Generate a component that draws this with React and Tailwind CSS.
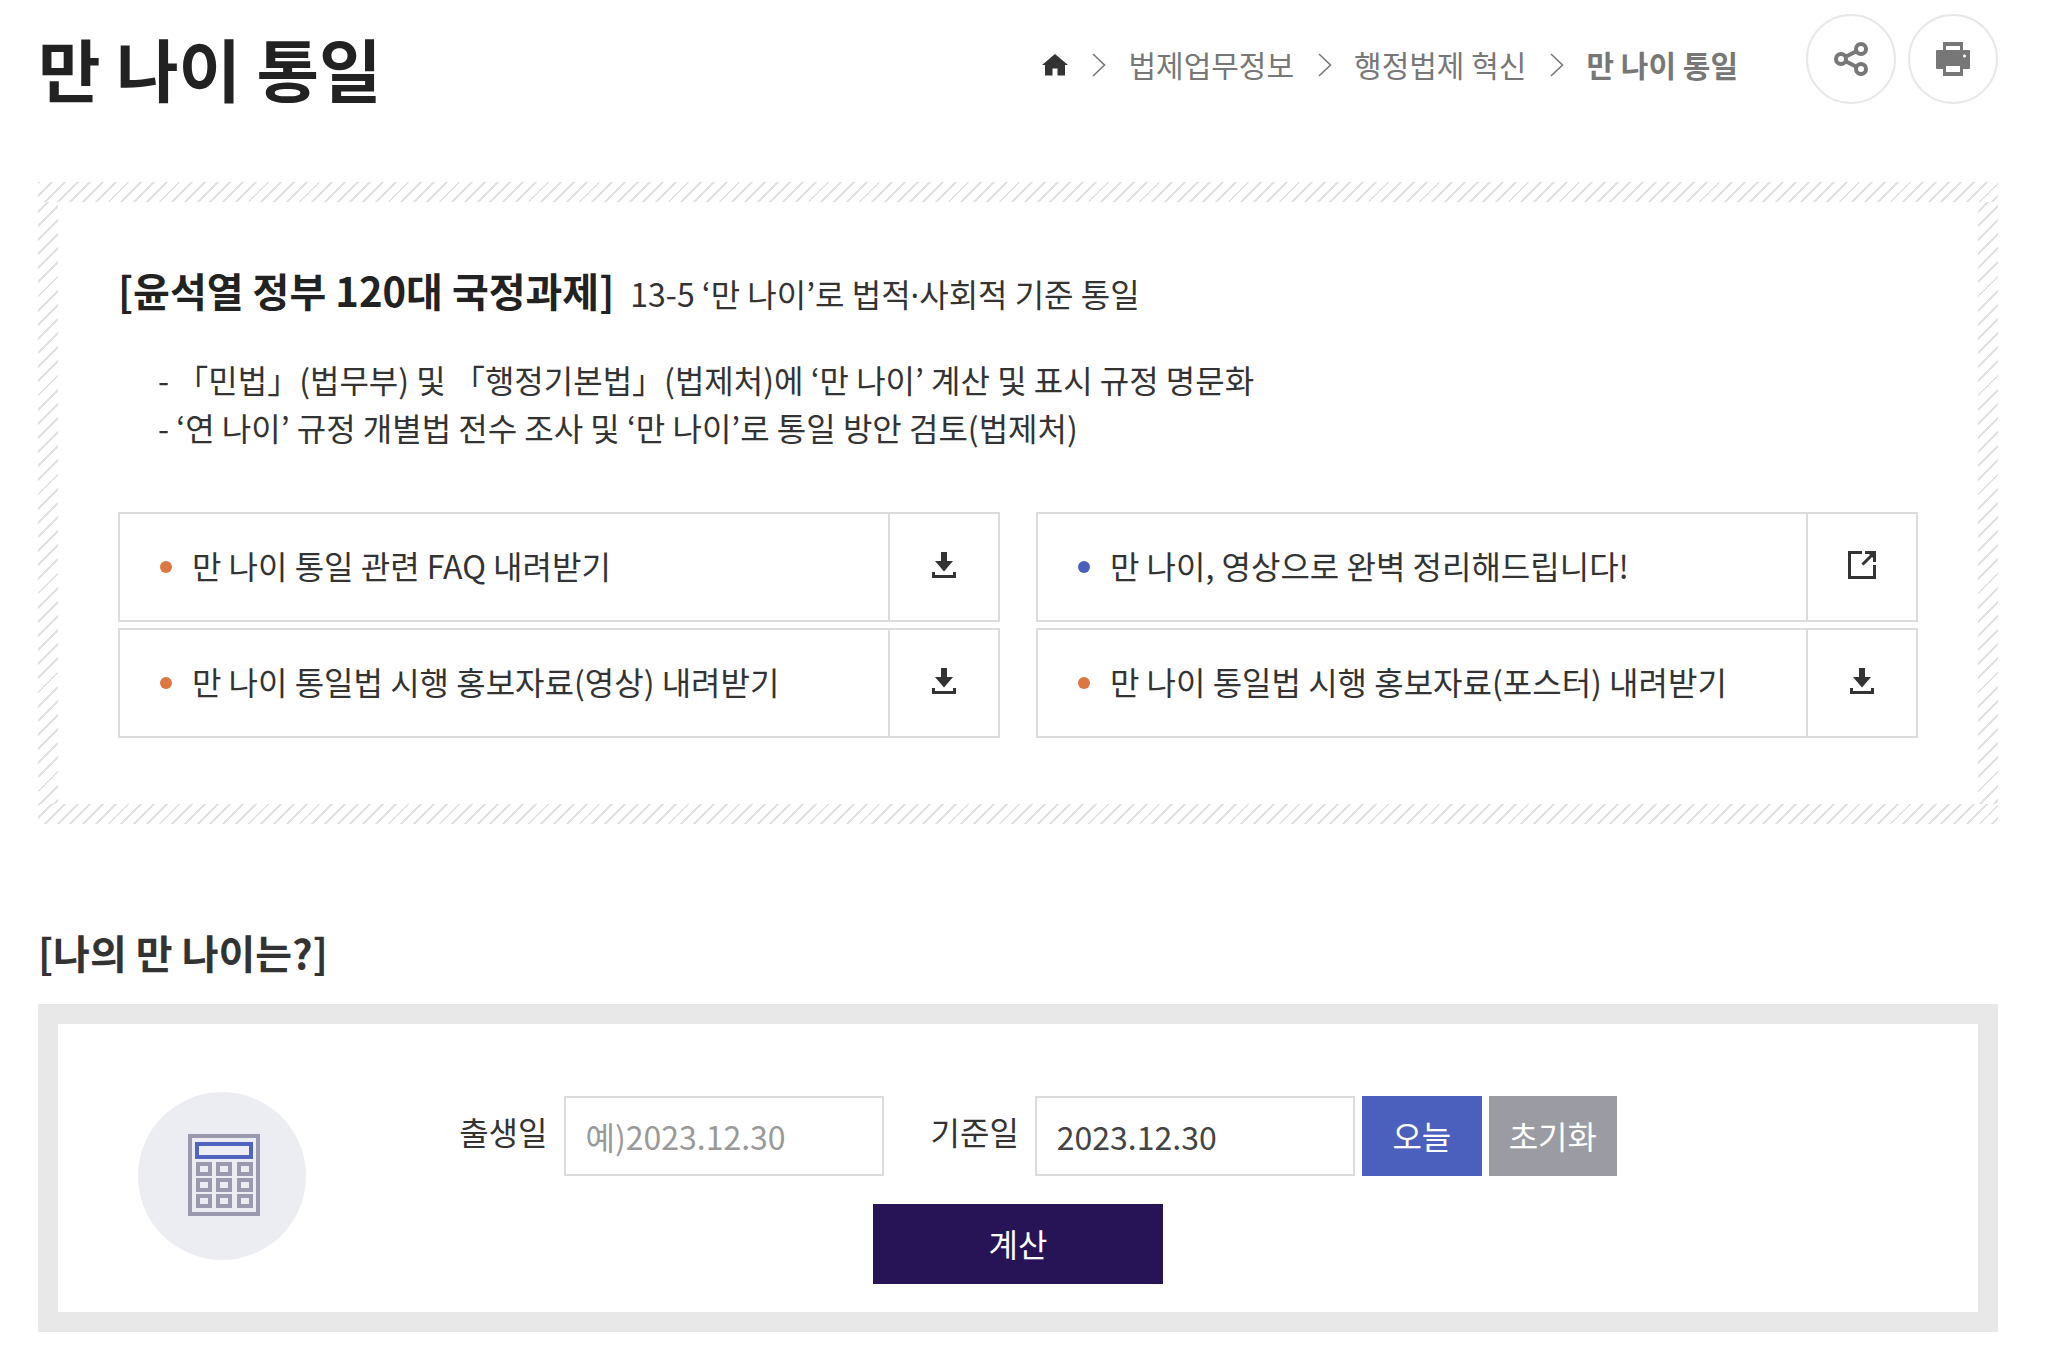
import React, { useState } from "react";

function HomeIcon() {
  return (
    <svg width="26" height="22" viewBox="0 0 26 22" fill="#333" aria-hidden="true">
      <path d="M13 0 26 11H23V21.500H15.500V14.500H10.500V21.500H3V11H0Z" />
    </svg>
  );
}

function Chevron() {
  return (
    <svg width="14" height="24" viewBox="0 0 14 24" fill="none" stroke="#777" strokeWidth="1.600" aria-hidden="true">
      <path d="M1 1 12.500 12 1 23" />
    </svg>
  );
}

function ShareIcon() {
  return (
    <svg width="34" height="34" viewBox="0 0 34 34" fill="none" stroke="#777" strokeWidth="4" aria-hidden="true">
      <circle cx="7" cy="17" r="5" />
      <circle cx="27" cy="7" r="5" />
      <circle cx="27" cy="27" r="5" />
      <path d="M11 15 23 9M11 19 23 25" />
    </svg>
  );
}

function PrintIcon() {
  return (
    <svg width="34" height="34" viewBox="0 0 34 34" aria-hidden="true">
      <path
        fill="#777"
        fillRule="evenodd"
        d="M7 0H27V8H33Q34 8 34 9V26Q34 27 33 27H27V34H7V27H1Q0 27 0 26V9Q0 8 1 8H7ZM10 4V8H24V4ZM10 24V30H24V24ZM27 14A1.500 1.500 0 1 0 30 14A1.500 1.500 0 1 0 27 14Z"
      />
    </svg>
  );
}

function DownloadIcon() {
  return (
    <svg width="24" height="26" viewBox="0 0 24 26" fill="#333" aria-hidden="true">
      <path d="M9 0H15V9H21L12 19.500 3 9H9Z" />
      <path d="M0 20H3V23H21V20H24V26H0Z" />
    </svg>
  );
}

function ExternalIcon() {
  return (
    <svg width="28" height="28" viewBox="0 0 28 28" aria-hidden="true">
      <path d="M14 1.500H1.500V26.500H26.500V14" fill="none" stroke="#333" strokeWidth="3" />
      <path d="M14.500 13.500 25 3" stroke="#333" strokeWidth="3" />
      <path d="M17 0H28V11H25V7L21 3H17Z" fill="#333" />
    </svg>
  );
}

function CalculatorIcon() {
  return (
    <svg className="shrink-0" width="168" height="168" viewBox="0 0 168 168" fill="none" aria-hidden="true">
      <circle cx="84" cy="84" r="84" fill="#ecedf3" />
      <rect x="52" y="44" width="68" height="78" stroke="#9b99ad" strokeWidth="4" />
      <rect x="59" y="52" width="54" height="13" stroke="#4f63bf" strokeWidth="4" />
      {[72, 88, 104].map((y) =>
        [60, 80, 101].map((x) => (
          <rect key={`${x}-${y}`} x={x} y={y} width="12" height="10" stroke="#9b99ad" strokeWidth="4" />
        ))
      )}
    </svg>
  );
}

const links = [
  { text: "만 나이 통일 관련 FAQ 내려받기", external: false },
  { text: "만 나이, 영상으로 완벽 정리해드립니다!", external: true },
  { text: "만 나이 통일법 시행 홍보자료(영상) 내려받기", external: false },
  { text: "만 나이 통일법 시행 홍보자료(포스터) 내려받기", external: false },
];

function LinkBox({ text, external }) {
  return (
    <li>
      <a href="#" className="flex h-[110px] border-2 border-[#dcdcdc]">
        <span className="flex flex-1 items-center gap-5 pl-10">
          <span className={external ? "size-3 rounded-full bg-[#4b60bc]" : "size-3 rounded-full bg-[#dc7741]"} />
          <span className="pb-1">{text}</span>
        </span>
        <span className="flex w-[110px] items-center justify-center border-l-2 border-[#dcdcdc] pb-1">
          {external ? <ExternalIcon /> : <DownloadIcon />}
        </span>
      </a>
    </li>
  );
}

const hatch =
  "[background-image:repeating-linear-gradient(135deg,#e2e2e2_0_2px,#fff_2px_9px),repeating-linear-gradient(135deg,#e2e2e2_0_2px,#fff_2px_9px),repeating-linear-gradient(135deg,#e2e2e2_0_2px,#fff_2px_10px),repeating-linear-gradient(135deg,#e2e2e2_0_2px,#fff_2px_10px)] [background-size:100%_20px,100%_20px,20px_100%,20px_100%] [background-position:top,bottom,left,right] bg-no-repeat";

const input = "h-20 w-80 border-2 border-[#dcdcdc] px-5 text-[#444] placeholder:text-[#999] outline-none";

export default function App() {
  const [birth, setBirth] = useState("");
  const [base, setBase] = useState("2023.12.30");

  return (
    <main className='bg-white pr-12 pl-[38px] font-["Noto_Sans_CJK_KR",sans-serif] text-[32px] leading-[48px] text-[#333]'>
      <header className="flex h-[182px] items-start justify-between pt-[14px]">
        <h1 className="text-[68px] leading-[108px] font-bold text-[#222]">만 나이 통일</h1>
        <div className="flex items-center">
          <nav aria-label="breadcrumb" className="pt-3">
            <ol className="flex items-center gap-6 text-[30px] text-[#777]">
              <li><a href="#" aria-label="홈"><HomeIcon /></a></li>
              <li className="flex items-center gap-[22px]"><Chevron /><a href="#" className="pb-[2px]">법제업무정보</a></li>
              <li className="flex items-center gap-[22px]"><Chevron /><a href="#" className="pb-[2px]">행정법제 혁신</a></li>
              <li className="flex items-center gap-[22px]"><Chevron /><strong className="pb-[2px] font-bold">만 나이 통일</strong></li>
            </ol>
          </nav>
          <div className="ml-[68px] flex gap-3">
            <button type="button" aria-label="공유" className="flex size-[90px] items-center justify-center rounded-full border-2 border-[#e8e8e8]">
              <ShareIcon />
            </button>
            <button type="button" aria-label="인쇄" className="flex size-[90px] items-center justify-center rounded-full border-2 border-[#e8e8e8]">
              <PrintIcon />
            </button>
          </div>
        </div>
      </header>

      <section className={`p-5 ${hatch}`}>
        <div className="bg-white px-[60px] pt-[58px] pb-[66px]">
          <h2 className="flex items-baseline gap-4">
            <strong className="text-[40px] leading-[60px] font-bold text-[#222]">[윤석열 정부 120대 국정과제]</strong>
            <span className="font-normal">
              13-5 ‘만 나이’로 법적<span className='font-["Noto_Sans",sans-serif]'>·</span>사회적 기준 통일
            </span>
          </h2>
          <div className="mt-[35px] pl-10">
            <p>- 「민법」(법무부) 및 「행정기본법」(법제처)에 ‘만 나이’ 계산 및 표시 규정 명문화</p>
            <p>- ‘연 나이’ 규정 개별법 전수 조사 및 ‘만 나이’로 통일 방안 검토(법제처)</p>
          </div>
          <ul className="mt-[61px] grid grid-cols-2 gap-x-9 gap-y-[6px]">
            {links.map((link) => (
              <LinkBox key={link.text} {...link} />
            ))}
          </ul>
        </div>
      </section>

      <section className="pt-[98px]">
        <h2 className="text-[40px] leading-[60px] font-bold">[나의 만 나이는?]</h2>
        <div className="mt-[22px] grid grid-cols-[168px_1fr_168px] border-[20px] border-[#e8e8e8] px-20 pt-[68px] pb-7">
          <CalculatorIcon />
          <form className="flex flex-col items-center gap-7 pt-1" onSubmit={(e) => e.preventDefault()}>
            <div className="flex items-center pl-10">
              <label htmlFor="birth" className="mr-4 pb-[10px]">출생일</label>
              <input id="birth" type="text" className={input} placeholder="예)2023.12.30" value={birth} onChange={(e) => setBirth(e.target.value)} />
              <label htmlFor="base" className="mr-4 ml-[47px] pb-[10px]">기준일</label>
              <input id="base" type="text" className={input} value={base} onChange={(e) => setBase(e.target.value)} />
              <button type="button" className="ml-[7px] h-20 w-[120px] bg-[#4b60bc] pb-[2px] text-white" onClick={() => setBase("2023.12.30")}>오늘</button>
              <button type="button" className="ml-[7px] h-20 w-32 bg-[#9b9ca3] pb-[2px] text-white" onClick={() => setBirth("")}>초기화</button>
            </div>
            <button type="submit" className="h-20 w-[290px] bg-[#261457] pb-[2px] text-white">계산</button>
          </form>
        </div>
      </section>
    </main>
  );
}
